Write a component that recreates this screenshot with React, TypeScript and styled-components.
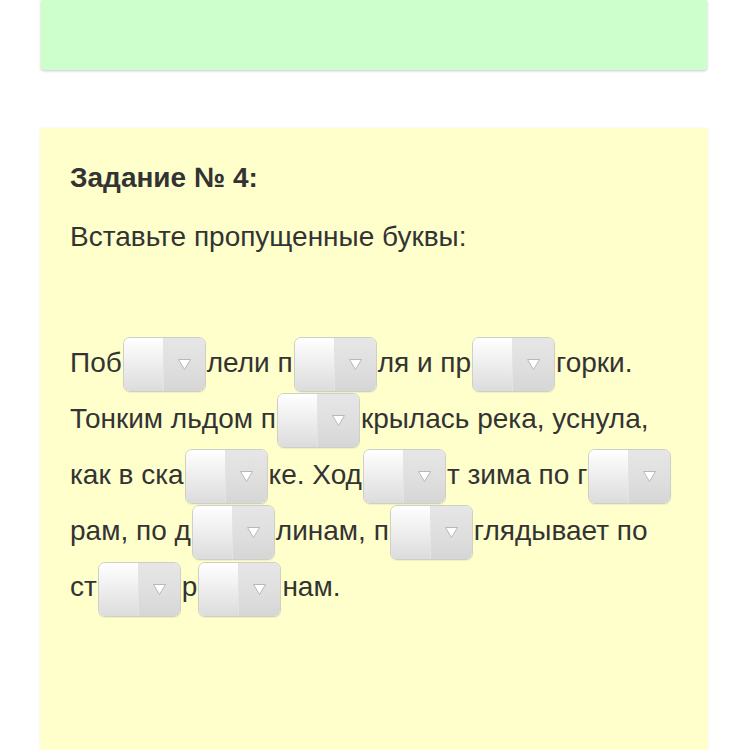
import React from "react";
import styled, { createGlobalStyle } from "styled-components";

const GlobalStyle = createGlobalStyle`
  html, body {
    margin: 0;
    padding: 0;
    background: #ffffff;
  }
  body {
    font-family: "Liberation Sans", Arial, Helvetica, sans-serif;
    color: #333333;
  }
`;

const Page = styled.div`
  display: flex;
  flex-direction: column;
  gap: 58px;
  padding: 0 40px;
  height: 750px;
  overflow: hidden;
`;

const SolvedCard = styled.section`
  flex: none;
  height: 70px;
  margin: 0 1px;
  background: #ccffcc;
  border-radius: 0 0 3px 3px;
  box-shadow: 0 1px 3px rgba(0, 0, 0, 0.22);
`;

const TaskCard = styled.section`
  flex: 1;
  background: #ffffcc;
  border-radius: 3px 3px 0 0;
  box-shadow: 0 0 2px rgba(0, 0, 0, 0.08);
  padding: 34px 30px 0 30px;
`;

const TaskTitle = styled.h2`
  margin: 0;
  font-size: 28px;
  line-height: 32px;
  font-weight: bold;
  color: #333333;
`;

const TaskPrompt = styled.p`
  margin: 27px 0 0 0;
  font-size: 28px;
  line-height: 32px;
  color: #333333;
`;

const TaskText = styled.p`
  margin: 83px 0 0 0;
  font-size: 28px;
  line-height: 53px;
  color: #333333;
`;

const Word = styled.span`
  white-space: nowrap;
`;

const Dropdown = styled.span`
  display: inline-flex;
  vertical-align: middle;
  box-sizing: border-box;
  width: 83px;
  height: 55px;
  margin: 0 1px 0 1px;
  border: 1px solid #cfcfc8;
  border-radius: 7px;
  overflow: hidden;
  box-shadow: 0 1px 1px rgba(0, 0, 0, 0.06);
`;

const DropdownValue = styled.span`
  flex: 1;
  background: linear-gradient(to bottom, #ffffff 0%, #f1f1f1 40%, #dcdcdc 100%);
`;

const DropdownArrow = styled.span`
  flex: none;
  width: 41px;
  display: flex;
  align-items: center;
  justify-content: center;
  border-left: 1px solid #e4e4e4;
  background: linear-gradient(to bottom, #e6e6e6 0%, #dedede 60%, #d6d6d6 100%);
`;

const Arrow = () => (
  <svg width="15" height="13" viewBox="0 0 15 13" aria-hidden="true">
    <polygon
      points="1.5,1.5 13.5,1.5 7.5,11.5"
      fill="#ffffff"
      stroke="#b8b8b8"
      strokeWidth="1"
      strokeLinejoin="round"
    />
  </svg>
);

const Gap = () => (
  <Dropdown role="combobox" aria-label="пропущенная буква">
    <DropdownValue />
    <DropdownArrow>
      <Arrow />
    </DropdownArrow>
  </Dropdown>
);

export default function App() {
  return (
    <>
      <GlobalStyle />
      <Page>
        <SolvedCard />
        <TaskCard>
          <TaskTitle>Задание № 4:</TaskTitle>
          <TaskPrompt>Вставьте пропущенные буквы:</TaskPrompt>
          <TaskText>
            <Word>
              Поб<Gap />лели
            </Word>{" "}
            <Word>
              п<Gap />ля
            </Word>{" "}
            и{" "}
            <Word>
              пр<Gap />горки.
            </Word>{" "}
            Тонким льдом{" "}
            <Word>
              п<Gap />крылась
            </Word>{" "}
            река, уснула, как в{" "}
            <Word>
              ска<Gap />ке.
            </Word>{" "}
            <Word>
              Ход<Gap />т
            </Word>{" "}
            зима по{" "}
            <Word>
              г<Gap />
            </Word>
            <Word>рам,</Word> по{" "}
            <Word>
              д<Gap />линам,
            </Word>{" "}
            <Word>
              п<Gap />глядывает
            </Word>{" "}
            по{" "}
            <Word>
              ст<Gap />р<Gap />нам.
            </Word>
          </TaskText>
        </TaskCard>
      </Page>
    </>
  );
}
